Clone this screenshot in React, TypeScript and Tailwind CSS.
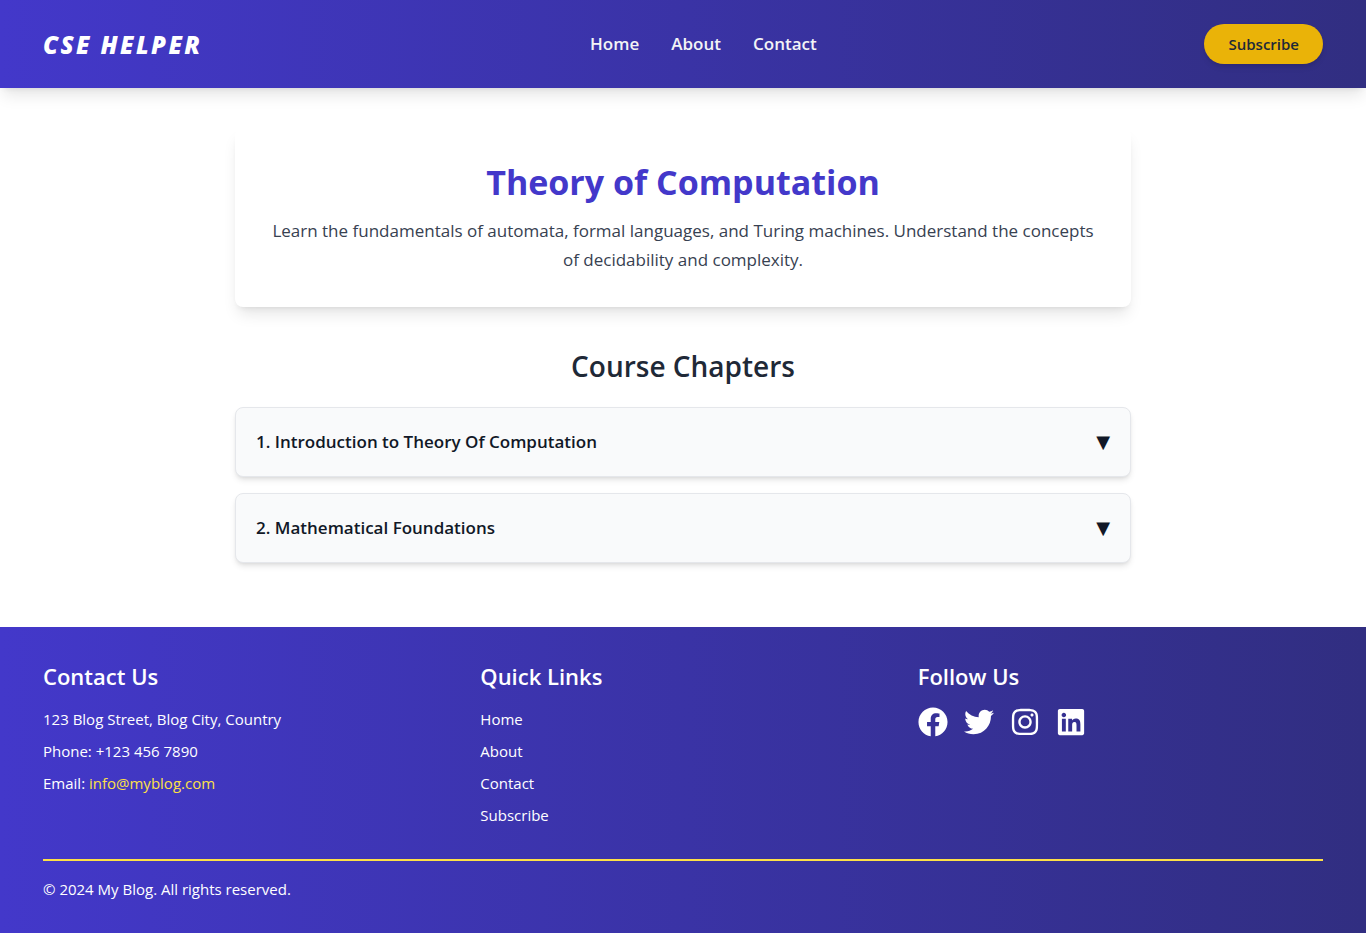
import { useState } from "react";
import { FaFacebook, FaInstagram, FaLinkedin, FaTwitter } from "react-icons/fa";

const navLinks = ["Home", "About", "Contact"];
const quickLinks = ["Home", "About", "Contact", "Subscribe"];

const chapters = [
  { title: "1. Introduction to Theory Of Computation", body: "Alphabets, strings and languages." },
  { title: "2. Mathematical Foundations", body: "Sets, relations, functions and proofs." },
];

const socials = [
  { label: "Facebook", Icon: FaFacebook },
  { label: "Twitter", Icon: FaTwitter },
  { label: "Instagram", Icon: FaInstagram },
  { label: "LinkedIn", Icon: FaLinkedin },
];

function Header() {
  return (
    <header className="relative bg-[linear-gradient(to_right,#4338ca,#312e81)] p-6 text-white shadow-[0_10px_15px_-3px_rgba(0,0,0,0.1),0_4px_6px_-4px_rgba(0,0,0,0.1)]">
      <div className="mx-auto flex max-w-7xl items-center justify-between">
        <a href="#" className="pt-0.5 text-2xl font-extrabold tracking-widest uppercase italic">
          CSE Helper
        </a>
        <nav className="flex gap-8">
          {navLinks.map((label) => (
            <a key={label} href="#" className="text-[17px] leading-7 font-semibold text-gray-100">
              {label}
            </a>
          ))}
        </nav>
        <button
          type="button"
          className="rounded-full bg-[#eab308] px-6 py-2 text-[15px] leading-6 font-semibold text-gray-800 shadow-md"
        >
          Subscribe
        </button>
      </div>
    </header>
  );
}

function Chapter({ title, body }: { title: string; body: string }) {
  const [open, setOpen] = useState(false);
  return (
    <li className="rounded-lg border border-[#e5e7eb] bg-[#f9fafb] shadow-md">
      <button
        type="button"
        aria-expanded={open}
        onClick={() => setOpen(!open)}
        className="flex w-full items-center justify-between p-5 text-left text-[17px] leading-7 font-semibold text-[#111827]"
      >
        <span>{title}</span>
        <span className="font-['DejaVu_Sans'] text-lg leading-7 font-normal">{open ? "▲" : "▼"}</span>
      </button>
      {open && <p className="px-5 pb-5 text-[#374151]">{body}</p>}
    </li>
  );
}

function Footer() {
  return (
    <footer className="bg-[linear-gradient(to_right,#4338ca,#312e81)] px-6 py-8 text-[15px] leading-6 text-white">
      <div className="mx-auto max-w-7xl">
        <div className="grid grid-cols-1 gap-8 md:grid-cols-3">
          <section>
            <h3 className="mb-3.5 text-[22px] leading-[34px] font-semibold">Contact Us</h3>
            <div className="flex flex-col gap-2">
              <p>123 Blog Street, Blog City, Country</p>
              <p>Phone: +123 456 7890</p>
              <p>
                Email:{" "}
                <a href="mailto:info@myblog.com" className="text-[#fde047]">
                  info@myblog.com
                </a>
              </p>
            </div>
          </section>
          <section>
            <h3 className="mb-3.5 text-[22px] leading-[34px] font-semibold">Quick Links</h3>
            <ul className="flex flex-col gap-2">
              {quickLinks.map((label) => (
                <li key={label}>
                  <a href="#">{label}</a>
                </li>
              ))}
            </ul>
          </section>
          <section>
            <h3 className="mb-3.5 text-[22px] leading-[34px] font-semibold">Follow Us</h3>
            <div className="flex gap-4">
              {socials.map(({ label, Icon }) => (
                <a key={label} href="#" aria-label={label}>
                  <Icon size={30} />
                </a>
              ))}
            </div>
          </section>
        </div>
        <div className="mt-8 border-t-2 border-[#fde047] pt-4">
          <p>© 2024 My Blog. All rights reserved.</p>
        </div>
      </div>
    </footer>
  );
}

export default function App() {
  return (
    <div className="flex min-h-screen flex-col bg-white font-['Open_Sans',sans-serif]">
      <Header />
      <main className="mx-auto w-full max-w-4xl grow pt-10 pb-16">
        <section className="mb-10 rounded-lg bg-white px-8 pt-8 pb-[33px] text-center shadow-[0_10px_15px_-3px_rgba(0,0,0,0.1),0_4px_6px_-4px_rgba(0,0,0,0.1)]">
          <h1 className="mb-3 text-[34px] leading-[44px] font-bold text-[#4338ca]">Theory of Computation</h1>
          <p className="text-[17px] leading-[29px] text-[#374151]">
            Learn the fundamentals of automata, formal languages, and Turing machines. Understand the concepts of
            decidability and complexity.
          </p>
        </section>
        <h2 className="mb-[22px] text-center text-[28px] leading-[38px] font-semibold text-[#1f2937]">
          Course Chapters
        </h2>
        <ul className="flex flex-col gap-4">
          {chapters.map((chapter) => (
            <Chapter key={chapter.title} {...chapter} />
          ))}
        </ul>
      </main>
      <Footer />
    </div>
  );
}
